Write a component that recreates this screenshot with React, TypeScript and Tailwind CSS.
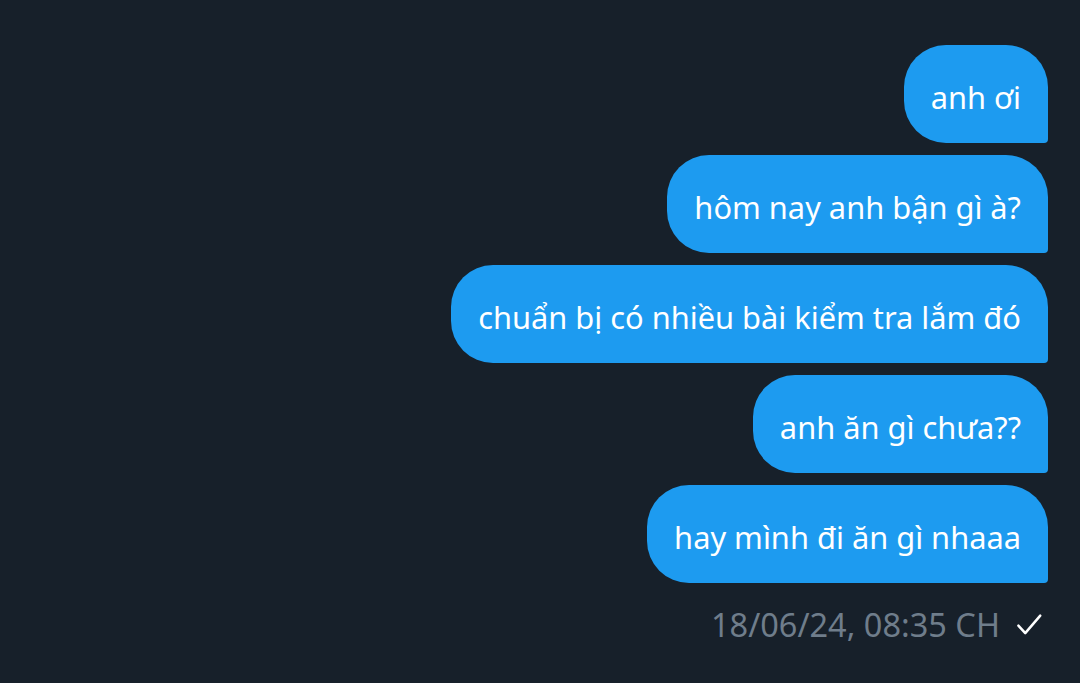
import React from 'react';

const messages = [
  'anh ơi',
  'hôm nay anh bận gì à?',
  'chuẩn bị có nhiều bài kiểm tra lắm đó',
  'anh ăn gì chưa??',
  'hay mình đi ăn gì nhaaa',
];

const App: React.FC = () => {
  return (
    <div
      className="w-[1080px] h-[683px] bg-[#17202a] overflow-hidden"
      style={{ fontFamily: '"Noto Sans", sans-serif' }}
    >
      <div className="flex flex-col items-end gap-[12px] pt-[45px] pr-[32px]">
        {messages.map((m, i) => (
          <div
            key={i}
            className="h-[98px] flex items-center px-[27px] pt-[6px] bg-[#1d9bf0] text-white text-[30.8px] rounded-[42px] rounded-br-[4px] whitespace-nowrap"
          >
            {m}
          </div>
        ))}
        <div className="flex items-center gap-[14px] mt-[6px] pr-[4px]">
          <span className="text-[32.5px] text-[#6f7d8b]">18/06/24, 08:35 CH</span>
          <svg className="w-[30px] h-[30px]" viewBox="0 0 24 24" fill="none" stroke="white" strokeWidth={2} strokeLinecap="round" strokeLinejoin="round">
            <path d="M3.5 12.5l5.5 6L21 4.5" />
          </svg>
        </div>
      </div>
    </div>
  );
};

export default App;
